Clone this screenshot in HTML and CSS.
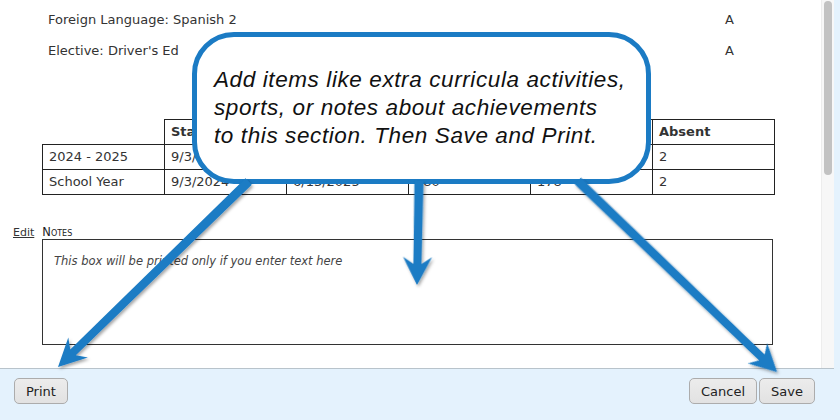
FILE: index.html
```html
<!DOCTYPE html>
<html lang="en">
<head>
<meta charset="utf-8">
<title>Report Card Notes</title>
<link rel="stylesheet" href="styles.css">
</head>
<body>
<div class="window">
  <div class="main">
    <div class="content">
      <div class="subjects">
        <div class="subject"><span class="name">Foreign Language: Spanish 2</span><span class="grade">A</span></div>
        <div class="subject"><span class="name">Elective: Driver's Ed</span><span class="grade">A</span></div>
      </div>
      <table class="attendance">
        <colgroup><col><col><col><col><col><col></colgroup>
        <tr><th class="blank"></th><th>Start</th><th>End</th><th>Days</th><th>Present</th><th>Absent</th></tr>
        <tr><td>2024 - 2025</td><td>9/3/2024</td><td>6/13/2025</td><td>180</td><td>178</td><td>2</td></tr>
        <tr><td>School Year</td><td>9/3/2024</td><td>6/13/2025</td><td>180</td><td>178</td><td>2</td></tr>
      </table>
      <div class="notes">
        <div class="notes-head"><span class="edit">Edit</span><span class="notes-title">Notes</span></div>
        <div class="notes-box">This box will be printed only if you enter text here</div>
      </div>
    </div>
    <div class="scrollbar"><div class="thumb"></div></div>
  </div>
  <div class="footer">
    <button class="btn">Print</button>
    <div class="btn-group"><button class="btn">Cancel</button><button class="btn">Save</button></div>
  </div>
</div>

<div class="callout">Add items like extra curricula activities,<br>sports, or notes about achievements<br>to this section. Then Save and Print.</div>

<svg class="arrows" viewBox="0 0 840 420" width="840" height="420">
  <defs>
    <filter id="sh" x="-20%" y="-20%" width="140%" height="140%">
      <feDropShadow dx="1.5" dy="2" stdDeviation="1.6" flood-color="#000" flood-opacity="0.35"/>
    </filter>
  </defs>
  <g fill="#1b7bc4" filter="url(#sh)">
    <polygon transform="translate(58,367) rotate(135.77)" points="0,0 -28,-14 -21,-4 -266,-4.5 -266,4.5 -21,4 -28,14"/>
    <polygon transform="translate(417,285) rotate(91.1)" points="0,0 -28,-14.5 -21,-4 -104,-4.5 -104,4.5 -21,4 -28,14.5"/>
    <polygon transform="translate(777,372) rotate(43.8)" points="0,0 -27,-14 -21,-4 -276,-4.5 -276,4.5 -21,4 -27,14"/>
  </g>
</svg>
</body>
</html>
```

FILE: styles.css
```css
html, body {
  margin: 0;
  padding: 0;
}

body {
  width: 840px;
  height: 420px;
  overflow: hidden;
  position: relative;
  background: #e4f2fd;
  font-family: "DejaVu Sans", Verdana, sans-serif;
  color: #333;
}

.window {
  width: 834px;
  height: 420px;
  display: flex;
  flex-direction: column;
}

.main {
  height: 368px;
  display: flex;
  background: #fff;
}

.content {
  flex: 1;
  padding-top: 12px;
}

.subjects {
  display: flex;
  flex-direction: column;
  gap: 15px;
  padding-left: 48px;
  font-size: 13px;
  line-height: 16px;
}

.subject {
  display: grid;
  grid-template-columns: 677px auto;
}

.attendance {
  margin: 60px 0 0 42px;
  border-collapse: collapse;
  table-layout: fixed;
  width: 731px;
  font-size: 13px;
  line-height: 16px;
}

.attendance col {
  width: 122px;
}

.attendance th,
.attendance td {
  border: 1px solid #222;
  padding: 4px 6px;
  text-align: left;
  white-space: nowrap;
  overflow: hidden;
}

.attendance th {
  font-weight: bold;
  color: #333;
}

.attendance th.blank {
  border-top: none;
  border-left: none;
}

.notes {
  margin-top: 30px;
}

.notes-head {
  display: flex;
  align-items: baseline;
  gap: 8px;
  padding-left: 13px;
  height: 15px;
  line-height: 14px;
}

.edit {
  font-size: 11px;
  text-decoration: underline;
  color: #333;
}

.notes-title {
  font-size: 11.5px;
  font-variant: small-caps;
  color: #222;
}

.notes-box {
  margin: -1px 0 0 42px;
  width: 731px;
  height: 106px;
  box-sizing: border-box;
  border: 1px solid #333;
  padding: 13px 11px;
  font-size: 11.5px;
  line-height: 16px;
  font-style: italic;
  color: #444;
}

.scrollbar {
  width: 13px;
  box-sizing: border-box;
  background: #f7f7f7;
  border-left: 1px solid #ededed;
  padding-top: 1px;
}

.thumb {
  width: 8px;
  height: 174px;
  margin-left: 2px;
  background: #c2c2c2;
  border-radius: 4px;
}

.footer {
  flex: 1;
  border-top: 1px solid #b8c3cb;
  display: flex;
  justify-content: space-between;
  align-items: flex-start;
  padding: 9px 19px 0 14px;
}

.btn-group {
  display: flex;
  gap: 2px;
}

.btn {
  height: 26px;
  padding: 0 11px;
  font-family: "DejaVu Sans", Verdana, sans-serif;
  font-size: 13px;
  color: #222;
  background: linear-gradient(#ececec, #e2e2e2);
  border: 1px solid #acacac;
  border-radius: 5px;
}

.callout {
  position: absolute;
  left: 192px;
  top: 32px;
  width: 459px;
  height: 152px;
  box-sizing: border-box;
  border: 5px solid #1b7bc4;
  border-radius: 42px;
  background: #fff;
  padding: 29px 0 0 17px;
  font-family: "Liberation Sans", Arial, sans-serif;
  font-style: italic;
  font-size: 22.5px;
  letter-spacing: 0.6px;
  line-height: 28px;
  color: #111;
  white-space: nowrap;
}

.arrows {
  position: absolute;
  left: 0;
  top: 0;
  pointer-events: none;
}
```
